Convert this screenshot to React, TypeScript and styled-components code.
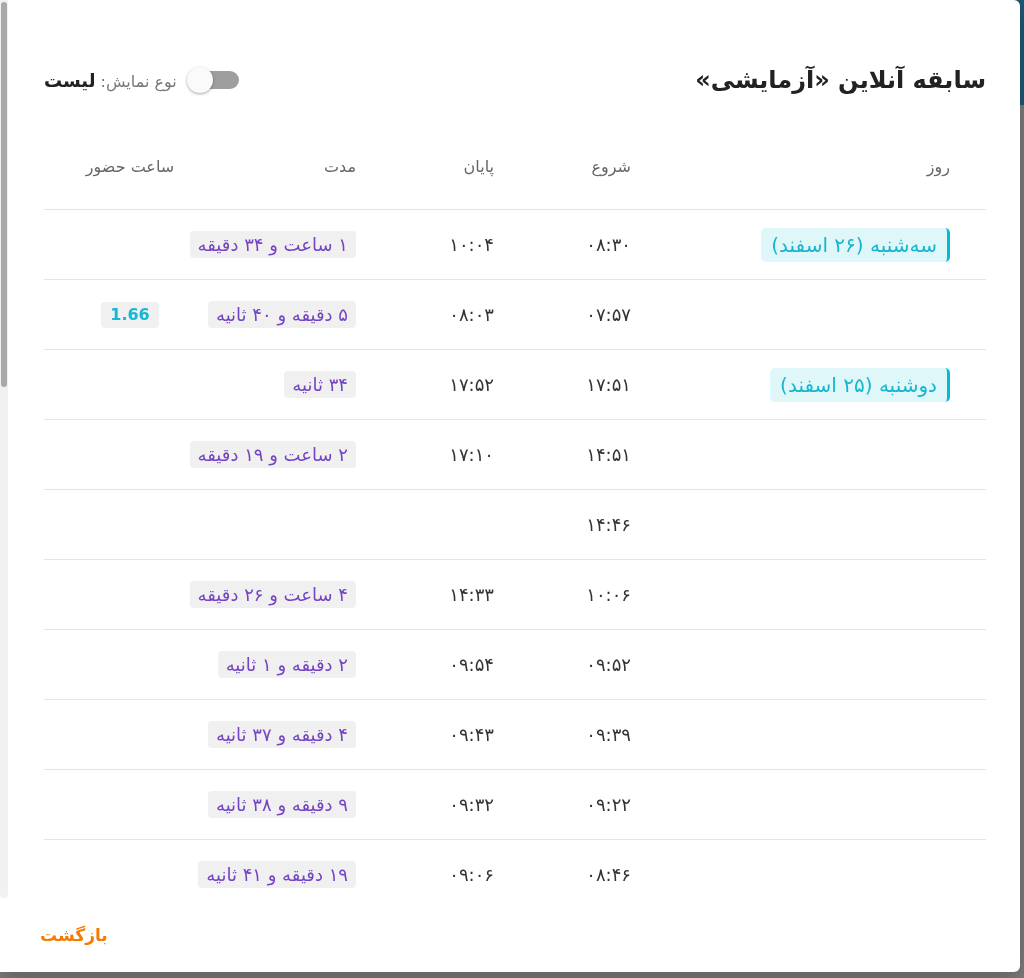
import React from "react";
import styled, { createGlobalStyle } from "styled-components";

const GlobalStyle = createGlobalStyle`
  * { box-sizing: border-box; }
  html, body { margin: 0; padding: 0; }
  body {
    font-family: "DejaVu Sans", "Noto Sans", sans-serif;
    background: #7d7d7d;
    overflow: hidden;
  }
`;

type Row = {
  day?: string;
  start: string;
  end?: string;
  duration?: string;
  score?: string;
};

const rows: Row[] = [
  { day: "سه‌شنبه (۲۶ اسفند)", start: "۰۸:۳۰", end: "۱۰:۰۴", duration: "۱ ساعت و ۳۴ دقیقه" },
  { start: "۰۷:۵۷", end: "۰۸:۰۳", duration: "۵ دقیقه و ۴۰ ثانیه", score: "1.66" },
  { day: "دوشنبه (۲۵ اسفند)", start: "۱۷:۵۱", end: "۱۷:۵۲", duration: "۳۴ ثانیه" },
  { start: "۱۴:۵۱", end: "۱۷:۱۰", duration: "۲ ساعت و ۱۹ دقیقه" },
  { start: "۱۴:۴۶" },
  { start: "۱۰:۰۶", end: "۱۴:۳۳", duration: "۴ ساعت و ۲۶ دقیقه" },
  { start: "۰۹:۵۲", end: "۰۹:۵۴", duration: "۲ دقیقه و ۱ ثانیه" },
  { start: "۰۹:۳۹", end: "۰۹:۴۳", duration: "۴ دقیقه و ۳۷ ثانیه" },
  { start: "۰۹:۲۲", end: "۰۹:۳۲", duration: "۹ دقیقه و ۳۸ ثانیه" },
  { start: "۰۸:۴۶", end: "۰۹:۰۶", duration: "۱۹ دقیقه و ۴۱ ثانیه" },
];

// thumb size as share of the visible height (list continues below)
const thumbShare = 0.43;

const App = () => {
  return (
    <Page>
      <GlobalStyle />
      <PageHeader />
      <Modal>
        <Body>
          <Content>
            <TitleRow>
              <Title>سابقه آنلاین «آزمایشی»</Title>
              <ViewToggle>
                <SwitchTrack>
                  <SwitchThumb />
                </SwitchTrack>
                <ToggleLabel>
                  نوع نمایش: <strong>لیست</strong>
                </ToggleLabel>
              </ViewToggle>
            </TitleRow>

            <Table>
              <HeadRow>
                <HeadCell>روز</HeadCell>
                <HeadCell>شروع</HeadCell>
                <HeadCell>پایان</HeadCell>
                <HeadCell>مدت</HeadCell>
                <HeadCell $center>ساعت حضور</HeadCell>
              </HeadRow>
              {rows.map((row, i) => (
                <BodyRow key={i}>
                  <Cell>{row.day && <DayChip>{row.day}</DayChip>}</Cell>
                  <Cell>
                    <Time>{row.start}</Time>
                  </Cell>
                  <Cell>{row.end && <Time>{row.end}</Time>}</Cell>
                  <Cell>
                    {row.duration && <DurationChip>{row.duration}</DurationChip>}
                  </Cell>
                  <Cell $center>
                    {row.score && <ScoreChip>{row.score}</ScoreChip>}
                  </Cell>
                </BodyRow>
              ))}
            </Table>
          </Content>
          <ScrollRail>
            <ScrollThumb style={{ height: `${thumbShare * 100}%` }} />
          </ScrollRail>
        </Body>
        <Footer>
          <BackButton>بازگشت</BackButton>
        </Footer>
      </Modal>
    </Page>
  );
};

export default App;

const Page = styled.div`
  width: 100vw;
  height: 100vh;
  background: #7d7d7d;
`;

const PageHeader = styled.div`
  height: 105px;
  background: #1d5874;
`;

const Modal = styled.div`
  position: fixed;
  top: 0;
  left: 0;
  width: 1020px;
  height: 972px;
  background: #fff;
  border-radius: 0 6px 6px 0;
  display: flex;
  flex-direction: column;
  direction: rtl;
  overflow: hidden;
  box-shadow: 0 8px 24px rgba(0, 0, 0, 0.25);
`;

const Body = styled.div`
  flex: 1;
  min-height: 0;
  display: flex;
`;

const Content = styled.div`
  flex: 1;
  min-width: 0;
  overflow: hidden;
  padding: 56px 34px 0 36px;
`;

const ScrollRail = styled.div`
  width: 8px;
  flex-shrink: 0;
  background: #f1f1f1;
  border-radius: 0 0 4px 4px;
  padding: 2px 1px 0;
`;

const ScrollThumb = styled.div`
  width: 100%;
  background: #a9a9a9;
  border-radius: 3px;
`;

const TitleRow = styled.div`
  display: flex;
  justify-content: space-between;
  align-items: center;
  height: 48px;
  margin-bottom: 36px;
`;

const Title = styled.h2`
  margin: 0;
  font-size: 24px;
  font-weight: 700;
  color: #222;
`;

const ViewToggle = styled.div`
  display: flex;
  align-items: center;
  gap: 10px;
`;

const SwitchTrack = styled.div`
  position: relative;
  width: 52px;
  height: 26px;
  display: flex;
  align-items: center;
  justify-content: flex-start;

  &::before {
    content: "";
    width: 44px;
    height: 18px;
    border-radius: 9px;
    background: #9e9e9e;
  }
`;

const SwitchThumb = styled.span`
  position: absolute;
  left: 0;
  top: 0;
  width: 26px;
  height: 26px;
  border-radius: 50%;
  background: #fafafa;
  box-shadow: 0 1px 3px rgba(0, 0, 0, 0.35);
`;

const ToggleLabel = styled.div`
  font-size: 16px;
  color: #777;

  strong {
    font-size: 18px;
    font-weight: 700;
    color: #222;
  }
`;

const Table = styled.div`
  display: flex;
  flex-direction: column;
`;

const HeadRow = styled.div`
  display: grid;
  grid-template-columns: 319px 137px 138px 181px 167px;
  height: 70px;
  padding-bottom: 16px;
  border-bottom: 1px solid #e4e4e4;
`;

const BodyRow = styled.div`
  display: grid;
  grid-template-columns: 319px 137px 138px 181px 167px;
  height: 70px;
  flex-shrink: 0;
  border-bottom: 1px solid #e4e4e4;
`;

const HeadCell = styled.div<{ $center?: boolean }>`
  display: flex;
  align-items: center;
  justify-content: ${(p) => (p.$center ? "center" : "flex-start")};
  padding: ${(p) => (p.$center ? "0 36px 0 41px" : "0 36px 0 0")};
  font-size: 16px;
  color: #666;
  white-space: nowrap;
`;

const Cell = styled.div<{ $center?: boolean }>`
  display: flex;
  align-items: center;
  justify-content: ${(p) => (p.$center ? "center" : "flex-start")};
  padding: ${(p) => (p.$center ? "0 36px 0 41px" : "0 36px 0 0")};
  white-space: nowrap;
`;

const DayChip = styled.span`
  display: inline-flex;
  align-items: center;
  height: 34px;
  padding: 0 10px;
  font-size: 20px;
  color: #17b6d0;
  background: #e0f7fa;
  border-radius: 5px;
  border-right: 3px solid #00bcd4;
`;

const Time = styled.span`
  font-size: 18px;
  color: #333;
`;

const DurationChip = styled.span`
  display: inline-flex;
  align-items: center;
  height: 27px;
  padding: 0 8px;
  font-size: 18px;
  color: #7444c4;
  background: #f0f0f0;
  border-radius: 4px;
`;

const ScoreChip = styled.span`
  display: inline-flex;
  align-items: center;
  height: 26px;
  padding: 0 9px;
  font-size: 16px;
  font-weight: 700;
  color: #14b8d4;
  background: #f0f0f0;
  border-radius: 4px;
  direction: ltr;
`;

const Footer = styled.div`
  height: 74px;
  flex-shrink: 0;
  display: flex;
  align-items: center;
  justify-content: flex-end;
  padding: 0 40px;
`;

const BackButton = styled.button`
  border: none;
  background: none;
  padding: 0;
  font-family: inherit;
  font-size: 17px;
  font-weight: 700;
  color: #f57c00;
  cursor: pointer;
`;
